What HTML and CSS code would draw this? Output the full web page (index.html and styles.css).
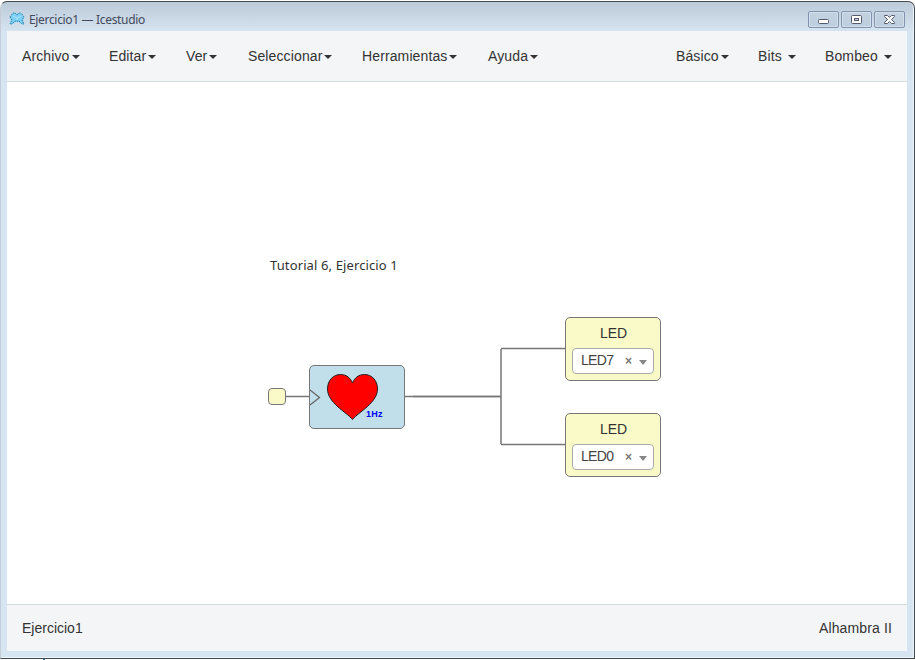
FILE: index.html
```html
<!DOCTYPE html>
<html lang="es">
<head>
<meta charset="utf-8">
<title>Ejercicio1 — Icestudio</title>
<link rel="stylesheet" href="styles.css">
</head>
<body>
<div class="window">
  <header class="titlebar">
    <svg class="logo" width="16" height="14" viewBox="0 0 16 14"><path d="M4 1h3l1 1 1-1h3l3 4-1 3 1 4h-3l-2-2H6l-2 2H1l1-4-1-3z" fill="#7dd0f5"/><path d="M4 1h2l2 2 2-2h2M1 5l3-4M15 5l-3-4M1 5l2 3-2 4h2l3-3h4l3 3h2l-2-4 2-3" fill="none" stroke="#2c7da1" stroke-width=".9" stroke-dasharray="1.500 .8"/><path d="M4 4l4 2 4-2M8 6v2" fill="none" stroke="#b5ecff" stroke-width=".8"/></svg>
    <span class="caption">Ejercicio1 — Icestudio</span>
    <div class="controls">
      <button class="control" aria-label="Minimizar"><svg width="29" height="15"><rect x="9.5" y="7.5" width="10" height="4" rx="1" fill="#fff" stroke="#555b6b"/></svg></button>
      <button class="control" aria-label="Maximizar"><svg width="29" height="15"><rect x="9.5" y="3.5" width="10" height="8" rx="1" fill="#fff" stroke="#555b6b"/><rect x="12.5" y="6.5" width="4" height="2" fill="#c2d0e0" stroke="#555b6b"/></svg></button>
      <button class="control" aria-label="Cerrar"><svg width="29" height="15"><path d="M9.5 3.5h3l2 2 2-2h3v1l-3 3 3 3v1h-3l-2-2-2 2h-3v-1l3-3-3-3z" fill="#fff" stroke="#555b6b"/></svg></button>
    </div>
  </header>
  <main class="app">
    <nav class="navbar">
      <a class="item archivo">Archivo<i class="caret"></i></a>
      <a class="item editar">Editar<i class="caret"></i></a>
      <a class="item ver">Ver<i class="caret"></i></a>
      <a class="item seleccionar">Seleccionar<i class="caret"></i></a>
      <a class="item herramientas">Herramientas<i class="caret"></i></a>
      <a class="item ayuda">Ayuda<i class="caret"></i></a>
      <div class="collections">
        <a class="item basico">Básico<i class="caret"></i></a>
        <a class="item bits">Bits <i class="caret spaced"></i></a>
        <a class="item bombeo">Bombeo <i class="caret spaced"></i></a>
      </div>
    </nav>
    <section class="canvas">
      <svg class="wires" width="900" height="522"><path d="M278 314.500H303M397 314.500H494M494 362V267M494 266.500H559M494 362.500H559" fill="none" stroke="#777" stroke-width="1.500"/><path d="M406 314.500H494" stroke="#777" stroke-width="1.700"/></svg>
      <div class="note">Tutorial 6, Ejercicio 1</div>
      <div class="pin"></div>
      <div class="heart-block">
        <svg width="94" height="62" viewBox="0 0 94 62"><path d="M0 24l9.500 7.500L0 39" fill="none" stroke="#666" stroke-width="1.300"/><path d="M42.500 53.500C36.500 46 17.500 37 17.500 23C17.500 14 23.500 8.500 30.500 8.500C36.500 8.500 40.500 12 42.500 17C44.500 12 48.500 8.500 54.500 8.500C61.500 8.500 67.500 14 67.500 23C67.500 37 48.500 46 42.500 53.500Z" fill="#f00" stroke="#222"/></svg>
        <span class="rate">1Hz</span>
      </div>
      <div class="led led-top">
        <div class="led-label">LED</div>
        <div class="select"><span>LED7</span><b>×</b><i></i></div>
      </div>
      <div class="led led-bottom">
        <div class="led-label">LED</div>
        <div class="select"><span>LED0</span><b>×</b><i></i></div>
      </div>
    </section>
    <footer class="status"><span class="project">Ejercicio1</span><span class="board">Alhambra II</span></footer>
  </main>
</div>
<div class="below"></div>
</body>
</html>
```
FILE: styles.css
```css
* { box-sizing: border-box; }
body {
  margin: 0;
  height: 660px;
  overflow: hidden;
  background: #fff;
  color: #333;
  font: 14px/20px "Liberation Sans", Arial, sans-serif;
}
.window {
  width: 915px;
  height: 658px;
  margin-top: 1px;
  display: flex;
  flex-direction: column;
  padding: 0 6px 6px;
  border: 1px solid #46494d;
  border-left-color: #c5ced8;
  border-right-color: #46494d;
  border-radius: 7px 7px 0 0;
  background: linear-gradient(#bccbd9, #d7e4f2 30px);
  box-shadow: inset -1px 0 #edf5fc, inset 0 -1px #edf5fc;
}
.titlebar {
  height: 29px;
  flex: none;
  display: flex;
  align-items: center;
  padding: 4px 3px 0 2px;
}
.logo { flex: none; margin-top: 1px; }
.caption {
  margin: 2px 0 0 4px;
  font: 12px/18px "Noto Sans", sans-serif;
  letter-spacing: -.33px;
  color: #41495a;
}
.controls { display: flex; gap: 2px; margin-left: auto; margin-top: 2px; }
.control {
  display: block;
  width: 31px;
  height: 17px;
  padding: 0;
  border: 1px solid #8493ad;
  border-radius: 2px;
  background: linear-gradient(#c4d2e1, #bdcede);
  box-shadow: inset 0 0 0 1px #d3dfeb;
}
.control svg { display: block; }
.app {
  width: 900px;
  height: 620px;
  flex: none;
  display: flex;
  flex-direction: column;
  background: #fff;
}
.navbar {
  height: 51px;
  flex: none;
  display: flex;
  align-items: center;
  padding-left: 15px;
  border-bottom: 1px solid #d5dcdc;
  background: #f4f5f7;
}
.item { display: flex; align-items: center; letter-spacing: .12px; white-space: pre; }
.caret {
  margin: 2px 0 0 2px;
  border: 4px solid transparent;
  border-top-color: #333;
  border-bottom: 0;
}
.spaced { margin-left: 2px; }
.archivo { width: 87px; }
.editar { width: 77px; }
.ver { width: 62px; }
.seleccionar { width: 114px; }
.herramientas { width: 126px; }
.collections { display: flex; margin-left: auto; }
.basico { width: 82px; }
.bits { width: 67px; }
.bombeo { width: 82px; }
.canvas { position: relative; height: 522px; flex: none; }
.wires { position: absolute; left: 0; top: 0; }
.note {
  position: absolute;
  left: 263px;
  top: 173px;
  font: 13px/20px "Noto Sans", sans-serif;
  letter-spacing: .12px;
  white-space: nowrap;
}
.pin {
  position: absolute;
  left: 261px;
  top: 306px;
  width: 18px;
  height: 17px;
  border: 1px solid #777;
  border-radius: 4px;
  background: #fafac8;
}
.heart-block {
  position: absolute;
  left: 302px;
  top: 283px;
  width: 96px;
  height: 64px;
  border: 1px solid #777;
  border-radius: 5px;
  background: #c0dfeb;
}
.heart-block svg { display: block; }
.rate {
  position: absolute;
  left: 56px;
  top: 42px;
  font: bold 9px/12px "Liberation Sans", sans-serif;
  letter-spacing: .3px;
  color: #00f;
}
.led {
  position: absolute;
  left: 558px;
  width: 96px;
  height: 64px;
  padding: 5px 6px;
  border: 1px solid #777;
  border-radius: 5px;
  background: #fafac8;
}
.led-top { top: 235px; }
.led-bottom { top: 331px; }
.led-label { padding-left: 1px; text-align: center; letter-spacing: -.1px; }
.select {
  height: 26px;
  display: flex;
  align-items: center;
  margin-top: 5px;
  padding: 0 6px 2px 8px;
  border: 1px solid #aaa;
  border-radius: 4px;
  background: #fff;
  color: #444;
}
.select span { width: 44px; letter-spacing: -.7px; }
.select b { width: 14px; padding-top: 2px; font-size: 12px; color: #777; }
.select i {
  margin-top: 4px;
  border: 4px solid transparent;
  border-top: 5px solid #888;
  border-bottom: 0;
}
.status {
  height: 47px;
  flex: none;
  display: flex;
  justify-content: space-between;
  align-items: center;
  padding: 0 15px;
  border-top: 1px solid #d5dcdc;
  background: #f4f5f7;
}
.board { letter-spacing: .13px; }
.below { width: 2px; height: 1px; margin-left: 43px; background: #347da8; }
```
